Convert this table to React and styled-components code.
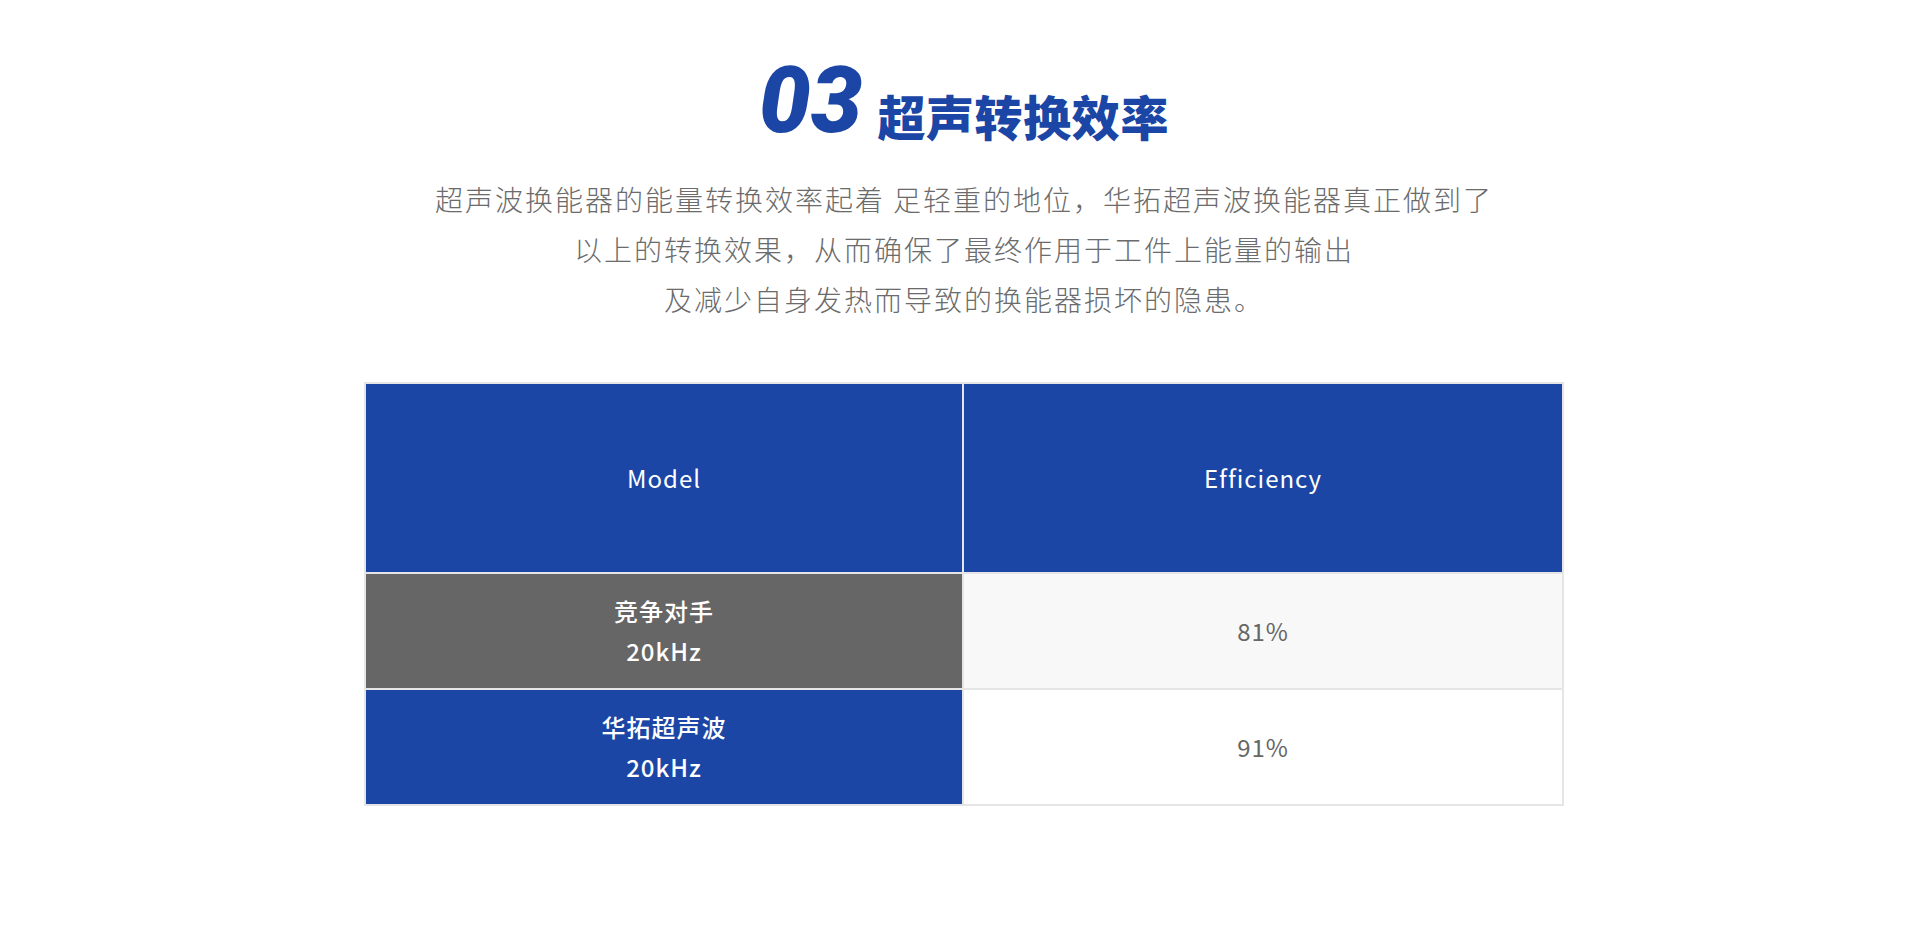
import React from "react";
import styled, { createGlobalStyle } from "styled-components";

const GlobalStyle = createGlobalStyle`
  html, body {
    margin: 0;
    padding: 0;
    background: #ffffff;
  }
  body {
    font-family: "Noto Sans CJK SC", "Noto Sans", sans-serif;
  }
`;

const BLUE = "#1b46a5";

const Page = styled.main`
  box-sizing: border-box;
  width: 1920px;
  min-height: 929px;
  padding: 55px 0 0 8px;
  display: flex;
  flex-direction: column;
  align-items: center;
`;

const TitleRow = styled.h2`
  margin: 0;
  display: flex;
  align-items: flex-end;
  gap: 15px;
  color: ${BLUE};
`;

const Num = styled.span`
  font-family: Roboto, "Liberation Sans", sans-serif;
  font-style: italic;
  font-weight: 900;
  font-size: 92px;
  line-height: 1;
  letter-spacing: 0;
`;

const TitleText = styled.span`
  margin-bottom: 8px;
  font-family: "Noto Sans CJK SC", sans-serif;
  font-weight: 900;
  font-size: 48px;
  line-height: 1;
  letter-spacing: 0.6px;
`;

const Intro = styled.p`
  margin: 27px 0 0;
  font-family: "Noto Sans CJK SC", sans-serif;
  font-weight: 300;
  font-size: 28px;
  line-height: 50px;
  letter-spacing: 2px;
  color: #6b6b6b;
  text-align: center;
`;

const Table = styled.div`
  margin-top: 58px;
  width: 1200px;
  box-sizing: border-box;
  padding: 2px;
  gap: 2px;
  background: #e5e5e5;
  display: grid;
  grid-template-columns: 596px 598px;
  grid-template-rows: 188px 114px 114px;
`;

const cellBg = {
  head: BLUE,
  rival: "#666666",
  brand: BLUE,
  light: "#f8f8f8",
  plain: "#ffffff",
};

const Cell = styled.div`
  display: flex;
  flex-direction: column;
  align-items: center;
  justify-content: center;
  text-align: center;
  background: ${(p) => cellBg[p.$tone]};
  color: ${(p) => (p.$tone === "light" || p.$tone === "plain" ? "#666666" : "#ffffff")};
  font-family: "Noto Sans CJK SC", sans-serif;
  font-size: 24px;
  line-height: 40px;
  letter-spacing: 1px;
  font-weight: ${(p) => (p.$tone === "rival" || p.$tone === "brand" ? 500 : 400)};
`;

const rows = [
  { name: "竞争对手", freq: "20kHz", tone: "rival", value: "81%", valueTone: "light" },
  { name: "华拓超声波", freq: "20kHz", tone: "brand", value: "91%", valueTone: "plain" },
];

export default function App() {
  return (
    <>
      <GlobalStyle />
      <Page>
        <TitleRow>
          <Num>03</Num>
          <TitleText>超声转换效率</TitleText>
        </TitleRow>
        <Intro>
          超声波换能器的能量转换效率起着 足轻重的地位，华拓超声波换能器真正做到了
          <br />
          以上的转换效果，从而确保了最终作用于工件上能量的输出
          <br />
          及减少自身发热而导致的换能器损坏的隐患。
        </Intro>
        <Table>
          <Cell $tone="head">Model</Cell>
          <Cell $tone="head">Efficiency</Cell>
          {rows.map((r) => (
            <React.Fragment key={r.name}>
              <Cell $tone={r.tone}>
                <span>{r.name}</span>
                <span>{r.freq}</span>
              </Cell>
              <Cell $tone={r.valueTone}>{r.value}</Cell>
            </React.Fragment>
          ))}
        </Table>
      </Page>
    </>
  );
}
